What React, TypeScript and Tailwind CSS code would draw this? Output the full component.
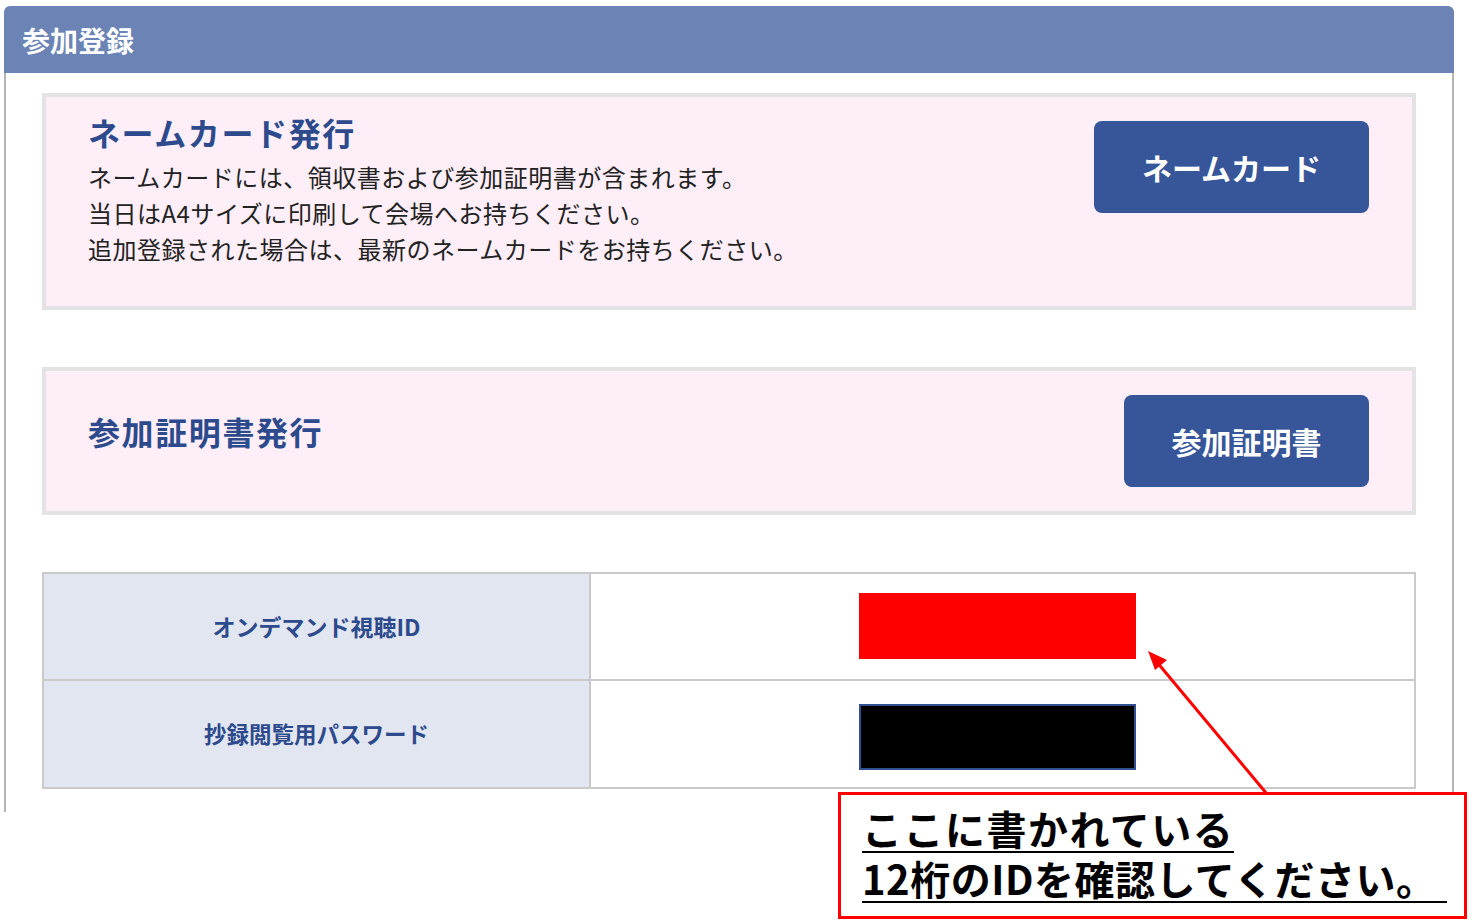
import React from "react";

const jp = { fontFamily: '"Noto Sans CJK JP", "Noto Sans", sans-serif' };

function IssueCard({ title, lines, button, tall }: { title: string; lines?: string[]; button: string; tall?: boolean }) {
  return (
    <div
      className={`flex justify-between border-4 border-[#e3e3e3] bg-[#fdeef8] pl-[42px] pr-[43px] ${tall ? "h-[217px]" : "h-[148px]"}`}
    >
      <div className={tall ? "pt-[12px]" : "pt-[37px]"}>
        <h2 className="text-[32px] font-bold leading-[46px] text-[#2c4a8c] tracking-[1.6px]">{title}</h2>
        {lines && (
          <div className="mt-[4px] text-[24px] leading-[36px] tracking-[0.5px] text-[#222]">
            {lines.map((l) => (
              <p key={l}>{l}</p>
            ))}
          </div>
        )}
      </div>
      <div className="pt-[24px]">
        <button
          className={`h-[92px] rounded-[8px] bg-[#37569a] text-[30px] font-bold text-white ${tall ? "w-[275px]" : "w-[245px]"}`}
        >
          {button}
        </button>
      </div>
    </div>
  );
}

export default function App() {
  return (
    <div className="relative h-[924px] w-[1476px] overflow-hidden bg-white" style={jp}>
      <div className="ml-[4px] mt-[6px] w-[1450px]">
        <div className="flex h-[67px] items-center rounded-t-[6px] bg-[#6c84b5] px-[18px]">
          <span className="text-[28px] font-bold text-white">参加登録</span>
        </div>
        <div className="border-x-2 border-[#b4b4b4] px-[36px] pb-[23px] pt-[20px]">
          <IssueCard
            tall
            title="ネームカード発行"
            button="ネームカード"
            lines={[
              "ネームカードには、領収書および参加証明書が含まれます。",
              "当日はA4サイズに印刷して会場へお持ちください。",
              "追加登録された場合は、最新のネームカードをお持ちください。",
            ]}
          />
          <div className="mt-[57px]">
            <IssueCard title="参加証明書発行" button="参加証明書" />
          </div>
          <div className="mt-[57px] border-2 border-[#cacaca]">
            <div className="flex h-[107px] border-b-2 border-[#cacaca]">
              <div className="flex w-[547px] items-center justify-center border-r-2 border-[#cacaca] bg-[#e2e6f1] text-[23px] font-bold text-[#2c4a8c]">
                オンデマンド視聴ID
              </div>
              <div className="flex-1 pl-[268px] pt-[19px]">
                <div className="h-[66px] w-[277px] bg-[#ff0000]" />
              </div>
            </div>
            <div className="flex h-[106px]">
              <div className="flex w-[547px] items-center justify-center border-r-2 border-[#cacaca] bg-[#e2e6f1] text-[22.5px] font-bold text-[#2c4a8c]">
                抄録閲覧用パスワード
              </div>
              <div className="flex-1 pl-[268px] pt-[23px]">
                <div className="h-[66px] w-[277px] border-2 border-[#2f4f8f] bg-black" />
              </div>
            </div>
          </div>
        </div>
      </div>

      <svg className="pointer-events-none absolute left-0 top-0" width="1476" height="924">
        <line x1="1267" y1="794" x2="1156" y2="661" stroke="#ff0000" strokeWidth="3" />
        <polygon points="1148,651 1167,660 1155,670" fill="#ff0000" />
      </svg>

      <div className="absolute left-[838px] top-[792px] h-[127px] w-[629px] border-[3px] border-[#ff0000] bg-white pl-[21px] pt-[3px] text-[40px] font-bold text-black">
        <div className="h-[50px] whitespace-nowrap">
          <span className="inline-block border-b-2 border-black leading-[46px] tracking-[1.5px]">ここに書かれている</span>
        </div>
        <div className="h-[50px] whitespace-nowrap">
          <span className="inline-block border-b-2 border-black pr-[10px] leading-[46px] tracking-[0.5px]">12桁のIDを確認してください。</span>
        </div>
      </div>
    </div>
  );
}
